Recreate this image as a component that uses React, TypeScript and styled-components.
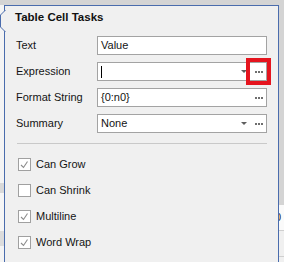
import React from 'react';
import styled, { createGlobalStyle } from 'styled-components';

const GlobalStyle = createGlobalStyle`
  html, body {
    margin: 0;
    padding: 0;
  }
  body {
    width: 284px;
    height: 262px;
    overflow: hidden;
    background: #d4d4d4;
    font-family: 'Liberation Sans', Arial, sans-serif;
    color: #141414;
  }
`;

type Band = { h: number; bg: string };

const leftBands: Band[] = [
  { h: 178, bg: '#f4f4f4' },
  { h: 10, bg: '#d9d9d9' },
  { h: 38, bg: '#f6f6f6' },
  { h: 15, bg: '#dcdcdc' },
  { h: 16, bg: '#f4f4f4' },
];

const fields = [
  { label: 'Text', value: 'Value', drop: false, dots: false },
  { label: 'Expression', value: '', caret: true, drop: true, dots: true, marked: true },
  { label: 'Format String', value: '{0:n0}', drop: false, dots: true },
  { label: 'Summary', value: 'None', drop: true, dots: true },
];

const checks = [
  { label: 'Can Grow', on: true },
  { label: 'Can Shrink', on: false },
  { label: 'Multiline', on: true },
  { label: 'Word Wrap', on: true },
];

const App = () => {
  return (
    <>
      <GlobalStyle />
      <Canvas>
        <TopBand />
        <Row>
          <SideStrip $w={4}>
            {leftBands.map((b, i) => (
              <StripBand key={i} $h={b.h} $bg={b.bg} />
            ))}
          </SideStrip>

          <Popup>
            <Notch width='6' height='24' viewBox='0 0 6 24'>
              <polygon points='5.5,0 0.5,5 0.5,17 5.5,22' fill='#f0f0f0' />
              <polyline points='5.5,0 0.5,5 0.5,17 5.5,22' fill='none' stroke='#4a6cad' strokeWidth='1' />
            </Notch>
            <Title>Table Cell Tasks</Title>
            <FieldGrid>
              {fields.map((f) => (
                <React.Fragment key={f.label}>
                  <Label>{f.label}</Label>
                  <Field>
                    <FieldText>
                      {f.caret && <Caret />}
                      {f.value}
                    </FieldText>
                    {f.drop && <DropArrow />}
                    {f.dots && (
                      <Dots>
                        <Dot />
                        <Dot />
                        <Dot />
                      </Dots>
                    )}
                    {f.marked && <Marker />}
                  </Field>
                </React.Fragment>
              ))}
            </FieldGrid>
            <Separator />
            <CheckList>
              {checks.map((c) => (
                <CheckRow key={c.label}>
                  <Box>
                    {c.on && (
                      <svg width='11' height='11' viewBox='0 0 11 11'>
                        <polyline points='2,6 4.5,8.5 8.5,2.5' fill='none' stroke='#8c8c8c' strokeWidth='1.1' />
                      </svg>
                    )}
                  </Box>
                  <CheckLabel>{c.label}</CheckLabel>
                </CheckRow>
              ))}
            </CheckList>
          </Popup>

          <SideStrip $w={5}>
            <StripBand $h={200} $bg='#d4d4d4' />
            <PeekBand>0</PeekBand>
            <StripBand $h={1} $bg='#cfcfcf' />
            <StripBand $h={25} $bg='#f0f0f0' />
            <StripBand $h={1} $bg='#cfcfcf' />
            <StripBand $h={10} $bg='#f0f0f0' />
          </SideStrip>
        </Row>
      </Canvas>
    </>
  );
};

export default App;

// styled
const Canvas = styled.div`
  width: 284px;
  height: 262px;
  display: flex;
  flex-direction: column;
  overflow: hidden;
`;

const TopBand = styled.div`
  height: 5px;
  background: #d4d4d4;
  flex: none;
`;

const Row = styled.div`
  display: flex;
  flex: 1;
  min-height: 0;
`;

const SideStrip = styled.div<{ $w: number }>`
  width: ${(p) => p.$w}px;
  flex: none;
  display: flex;
  flex-direction: column;
  overflow: hidden;
`;

const StripBand = styled.div<{ $h: number; $bg: string }>`
  height: ${(p) => p.$h}px;
  background: ${(p) => p.$bg};
  flex: none;
`;

const PeekBand = styled.div`
  height: 25px;
  flex: none;
  background: #fafafa;
  font-size: 11px;
  line-height: 25px;
  color: #2b2b2b;
  text-indent: -4px;
  white-space: nowrap;
`;

const Popup = styled.div`
  position: relative;
  width: 275px;
  flex: none;
  box-sizing: border-box;
  border: 1px solid #4a6cad;
  border-bottom: none;
  background: #f0f0f0;
  display: flex;
  flex-direction: column;
`;

const Notch = styled.svg`
  position: absolute;
  left: -5px;
  top: 4px;
`;

const Title = styled.div`
  margin: 4px 0 0 10px;
  font-size: 11.5px;
  line-height: 14px;
  font-weight: bold;
  color: #111111;
`;

const FieldGrid = styled.div`
  display: grid;
  grid-template-columns: 81px 1fr;
  grid-auto-rows: 19px;
  row-gap: 7px;
  margin: 12px 11px 0 11px;
`;

const Label = styled.div`
  font-size: 11px;
  line-height: 19px;
  white-space: nowrap;
`;

const Field = styled.div`
  position: relative;
  display: flex;
  align-items: center;
  box-sizing: border-box;
  height: 19px;
  border: 1px solid #a3a3a3;
  background: #ffffff;
  padding: 0 3px 0 3px;
`;

const FieldText = styled.div`
  flex: 1;
  display: flex;
  align-items: center;
  font-size: 11px;
  line-height: 17px;
  white-space: nowrap;
`;

const Caret = styled.span`
  display: inline-block;
  width: 1px;
  height: 12px;
  background: #000;
`;

const DropArrow = styled.span`
  width: 0;
  height: 0;
  border-left: 3px solid transparent;
  border-right: 3px solid transparent;
  border-top: 3px solid #5e5e5e;
  margin-right: 8px;
`;

const Dots = styled.span`
  display: flex;
  gap: 1px;
`;

const Dot = styled.span`
  width: 2px;
  height: 2px;
  background: #6e6e6e;
`;

const Marker = styled.span`
  position: absolute;
  left: 148px;
  top: -5px;
  width: 25px;
  height: 27px;
  box-sizing: border-box;
  border: 4px solid #e5141e;
`;

const Separator = styled.div`
  height: 1px;
  background: #c9c9c9;
  margin: 10px 11px 0 12px;
`;

const CheckList = styled.div`
  display: flex;
  flex-direction: column;
  margin: 7px 0 0 13px;
`;

const CheckRow = styled.div`
  display: flex;
  align-items: center;
  height: 26px;
  gap: 5px;
`;

const Box = styled.span`
  width: 13px;
  height: 13px;
  box-sizing: border-box;
  border: 1px solid #a0a0a0;
  background: #ffffff;
  display: flex;
  align-items: center;
  justify-content: center;
`;

const CheckLabel = styled.span`
  font-size: 11px;
  line-height: 14px;
  color: #141414;
`;
